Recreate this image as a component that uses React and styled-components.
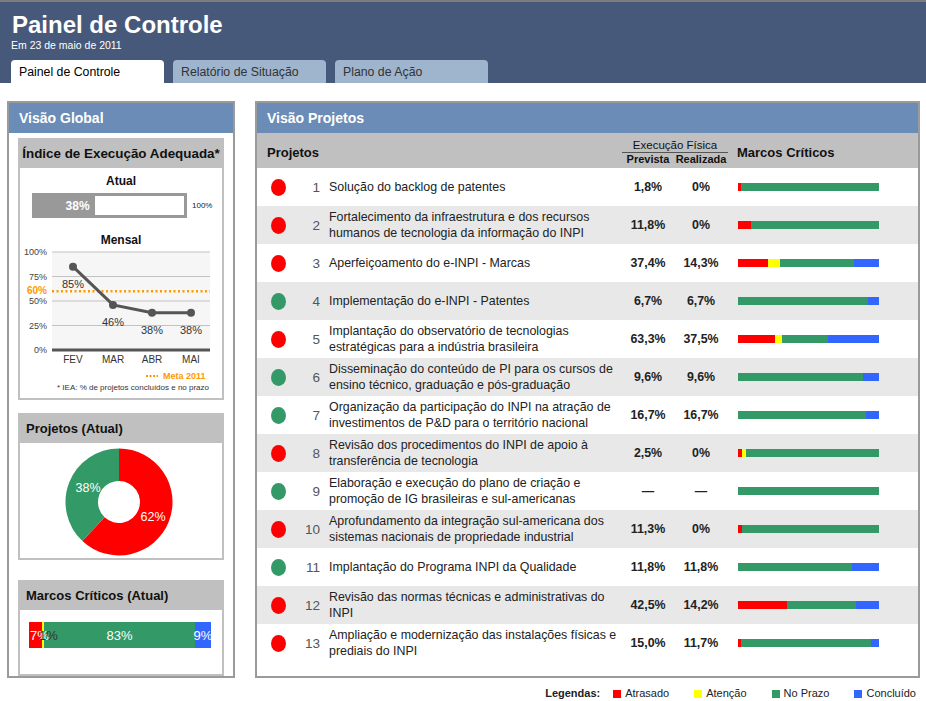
import React from "react";
import styled, { createGlobalStyle } from "styled-components";

const C = { r: "#ff0000", y: "#ffff00", g: "#339966", b: "#3366ff" };

const GlobalStyle = createGlobalStyle`
  body {
    margin: 0;
    background: #fff;
    font-family: "Liberation Sans", Arial, sans-serif;
    color: #222;
  }
  * { box-sizing: border-box; }
`;

const Header = styled.header`
  background: #47597a;
  border-top: 2px solid #7d7d7d;
  height: 83px;
  padding: 9px 0 0 11px;
`;

const Title = styled.h1`
  margin: 0;
  padding-left: 1px;
  font-size: 24px;
  line-height: 28px;
  font-weight: bold;
  color: #fff;
`;

const Subtitle = styled.div`
  font-size: 10.5px;
  line-height: 13px;
  color: #fff;
`;

const Tabs = styled.nav`
  display: flex;
  gap: 9px;
  margin-top: 8px;
`;

const Tab = styled.div`
  width: 153px;
  height: 23px;
  line-height: 21px;
  padding: 2px 0 0 8px;
  font-size: 12.3px;
  border-radius: 4px 4px 0 0;
  background: ${(p) => (p.$active ? "#ffffff" : "#9fb4cd")};
  color: ${(p) => (p.$active ? "#000" : "#333")};
`;

const Main = styled.main`
  display: flex;
  align-items: stretch;
  gap: 20px;
  padding: 18px 6px 0 7px;
`;

const LeftPanel = styled.section`
  width: 228px;
  border: 2px solid #9a9a9a;
  display: flex;
  flex-direction: column;
`;

const RightPanel = styled.section`
  flex: 1;
  border: 2px solid #9a9a9a;
  padding-bottom: 10px;
`;

const PanelTitle = styled.div`
  background: #6a8cb6;
  color: #fff;
  font-weight: bold;
  font-size: 14px;
  line-height: 30px;
  height: 30px;
  padding-left: 10px;
`;

const Card = styled.div`
  margin: ${(p) => p.$mt}px 9px 0;
  border: 2px solid #c0c0c0;
  background: #fff;
`;

const CardHeader = styled.div`
  background: #c0c0c0;
  height: 28px;
  line-height: 28px;
  font-size: ${(p) => (p.$center ? 13.4 : 13)}px;
  font-weight: bold;
  color: #111;
  white-space: nowrap;
  padding: ${(p) => (p.$center ? "0" : "0 6px")};
  text-align: ${(p) => (p.$center ? "center" : "left")};
`;

const CardBody = styled.div`
  height: ${(p) => p.$h}px;
  padding-top: ${(p) => p.$pt || 0}px;
`;

const SubTitle = styled.div`
  text-align: center;
  font-weight: bold;
  font-size: 12px;
  line-height: 16px;
  color: #111;
  margin-top: ${(p) => p.$mt || 0}px;
`;

const GaugeRow = styled.div`
  display: flex;
  align-items: center;
  margin: 4px 0 0 12px;
`;

const Gauge = styled.div`
  width: 155px;
  height: 25px;
  border: 3px solid #999;
  background: #fff;
  display: flex;
`;

const GaugeFill = styled.div`
  background: #999;
  color: #fff;
  font-weight: bold;
  font-size: 12px;
  display: flex;
  align-items: center;
  justify-content: flex-end;
  padding-right: 5px;
`;

const GaugeMax = styled.span`
  font-size: 8px;
  margin-left: 5px;
  color: #222;
`;

const MilestoneBar = styled.div`
  display: flex;
  width: 182px;
  height: 26px;
  margin: 12px 0 0 9px;
`;

const MilestoneSeg = styled.div`
  background: ${(p) => C[p.$c]};
  display: flex;
  align-items: center;
  justify-content: ${(p) => p.$align || "center"};
  white-space: nowrap;
  overflow: visible;
  font-size: 13px;
`;

const SegLabel = styled.span`
  position: relative;
  z-index: 1;
  color: ${(p) => (p.$dark ? "#333" : "#fff")};
  margin-left: ${(p) => p.$ml || 0}px;
`;

const Grid = styled.div`
  display: grid;
  grid-template-columns: 42px 21px 302px 52px 54px 1fr;
  align-items: center;
`;

const TableHead = styled(Grid)`
  background: #c0c0c0;
  height: 35px;
`;

const HeadLabel = styled.div`
  grid-column: ${(p) => p.$col};
  font-weight: bold;
  font-size: 13px;
  color: #111;
  padding-left: ${(p) => p.$pl}px;
  padding-top: 4px;
`;

const ExecGroup = styled.div`
  grid-column: 4 / 6;
  align-self: end;
  margin-bottom: 2px;
  display: grid;
  grid-template-columns: 52px 54px;
  text-align: center;
  color: #111;
`;

const ExecTitle = styled.div`
  grid-column: 1 / 3;
  font-size: 11.5px;
  line-height: 14px;
  border-bottom: 1px solid #555;
`;

const ExecSub = styled.div`
  font-size: 11px;
  font-weight: bold;
  line-height: 13px;
`;

const Row = styled(Grid)`
  height: 38px;
  background: ${(p) => (p.$alt ? "#e8e8e8" : "#fff")};
`;

const Dot = styled.span`
  justify-self: center;
  width: 15px;
  height: 17px;
  border-radius: 50%;
  background: ${(p) => C[p.$c]};
`;

const Num = styled.span`
  text-align: right;
  font-size: 13.5px;
  color: #555;
`;

const ProjText = styled.span`
  padding-left: 9px;
  font-size: 12.4px;
  line-height: 16px;
  color: #222;
`;

const Pct = styled.span`
  text-align: center;
  font-weight: bold;
  font-size: 12.4px;
  color: #222;
`;

const Bar = styled.div`
  margin-left: 10px;
  width: 141px;
  height: 8px;
  display: flex;
`;

const BarSeg = styled.div`
  background: ${(p) => C[p.$c]};
`;

const Legend = styled.footer`
  display: flex;
  justify-content: flex-end;
  align-items: center;
  padding: 9px 10px 0 0;
  font-size: 11px;
  line-height: 13px;
  color: #222;
`;

const LegendTitle = styled.span`
  font-weight: bold;
  margin-right: 13px;
`;

const LegendItem = styled.span`
  display: flex;
  align-items: center;
  gap: 4px;
  margin-left: ${(p) => (p.$first ? 0 : 25)}px;
`;

const Swatch = styled.span`
  width: 8px;
  height: 8px;
  background: ${(p) => C[p.$c]};
`;

const projects = [
  { st: "r", t: "Solução do backlog de patentes", p: "1,8%", r: "0%", bar: [["r", 2], ["g", 98]] },
  { st: "r", t: "Fortalecimento da infraestrutura e dos recursos humanos de tecnologia da informação do INPI", p: "11,8%", r: "0%", bar: [["r", 9], ["g", 91]] },
  { st: "r", t: "Aperfeiçoamento do e-INPI - Marcas", p: "37,4%", r: "14,3%", bar: [["r", 21], ["y", 9], ["g", 52], ["b", 18]] },
  { st: "g", t: "Implementação do e-INPI - Patentes", p: "6,7%", r: "6,7%", bar: [["g", 92], ["b", 8]] },
  { st: "r", t: "Implantação do observatório de tecnologias estratégicas para a indústria brasileira", p: "63,3%", r: "37,5%", bar: [["r", 26], ["y", 5], ["g", 33], ["b", 36]] },
  { st: "g", t: "Disseminação do conteúdo de PI para os cursos de ensino técnico, graduação e pós-graduação", p: "9,6%", r: "9,6%", bar: [["g", 89], ["b", 11]] },
  { st: "g", t: "Organização da participação do INPI na atração de investimentos de P&D para o território nacional", p: "16,7%", r: "16,7%", bar: [["g", 91], ["b", 9]] },
  { st: "r", t: "Revisão dos procedimentos do INPI de apoio à transferência de tecnologia", p: "2,5%", r: "0%", bar: [["r", 2.5], ["y", 3.5], ["g", 94]] },
  { st: "g", t: "Elaboração e execução do plano de criação e promoção de IG brasileiras e sul-americanas", p: "—", r: "—", bar: [["g", 100]] },
  { st: "r", t: "Aprofundamento da integração sul-americana dos sistemas nacionais de propriedade industrial", p: "11,3%", r: "0%", bar: [["r", 2.5], ["g", 97.5]] },
  { st: "g", t: "Implantação do Programa INPI da Qualidade", p: "11,8%", r: "11,8%", bar: [["g", 81], ["b", 19]] },
  { st: "r", t: "Revisão das normas técnicas e administrativas do INPI", p: "42,5%", r: "14,2%", bar: [["r", 35], ["g", 49], ["b", 16]] },
  { st: "r", t: "Ampliação e modernização das instalações físicas e prediais do INPI", p: "15,0%", r: "11,7%", bar: [["r", 2], ["g", 92], ["b", 6]] },
];

const monthly = [
  { m: "FEV", v: 85, x: 53 },
  { m: "MAR", v: 46, x: 93 },
  { m: "ABR", v: 38, x: 132 },
  { m: "MAI", v: 38, x: 171 },
];
const yOf = (v) => 102 - v * 0.98;

function LineChart() {
  const pts = monthly.map((d) => `${d.x},${yOf(d.v)}`).join(" ");
  return (
    <svg width="202" height="150" style={{ display: "block" }} fontFamily="Liberation Sans, Arial, sans-serif">
      <rect x="32" y="4" width="158" height="98" fill="#f6f6f6" />
      {[100, 75, 50, 25].map((v) => (
        <line key={v} x1="32" x2="190" y1={yOf(v)} y2={yOf(v)} stroke="#c2c2c2" strokeWidth="1.2" />
      ))}
      <line x1="32" x2="190" y1="102" y2="102" stroke="#555" strokeWidth="3" />
      <line x1="32" x2="190" y1={yOf(60)} y2={yOf(60)} stroke="#ff9900" strokeWidth="2.5" strokeDasharray="2 2.5" />
      {[100, 75, 50, 25, 0].map((v) => (
        <text key={v} x="27" y={yOf(v)} textAnchor="end" dominantBaseline="central" fontSize="9" fill="#444">
          {v}%
        </text>
      ))}
      <text x="27" y={yOf(60) - 1} textAnchor="end" dominantBaseline="central" fontSize="10" fontWeight="bold" fill="#ff9900">
        60%
      </text>
      <polyline points={pts} fill="none" stroke="#555" strokeWidth="3" />
      {monthly.map((d) => (
        <circle key={d.m} cx={d.x} cy={yOf(d.v)} r="4" fill="#555" />
      ))}
      {monthly.map((d, i) => (
        <text key={d.m + "l"} x={d.x} y={i === 0 ? 36 : i === 1 ? 74 : 82} textAnchor="middle" dominantBaseline="central" fontSize="11" fill="#333">
          {d.v}%
        </text>
      ))}
      {monthly.map((d) => (
        <text key={d.m + "x"} x={d.x} y="111" textAnchor="middle" dominantBaseline="central" fontSize="10" fill="#333">
          {d.m}
        </text>
      ))}
      <line x1="126" x2="138" y1="128" y2="128" stroke="#ff9900" strokeWidth="2" strokeDasharray="2 1.5" />
      <text x="143" y="128" dominantBaseline="central" fontSize="9" fontWeight="bold" fill="#ff9900">
        Meta 2011
      </text>
      <text x="37" y="139" dominantBaseline="central" fontSize="8" fill="#333" textLength="152" lengthAdjust="spacingAndGlyphs">
        * IEA: % de projetos concluídos e no prazo
      </text>
    </svg>
  );
}

function Donut() {
  return (
    <svg width="202" height="115" style={{ display: "block" }} fontFamily="Liberation Sans, Arial, sans-serif">
      <path d="M99,5.5 A53.5,53.5 0 1 1 62.4,98 L84.6,74.3 A21,21 0 1 0 99,38 Z" fill="#ff0000" />
      <path d="M62.4,98 A53.5,53.5 0 0 1 99,5.5 L99,38 A21,21 0 0 0 84.6,74.3 Z" fill="#339966" />
      <text x="68" y="45" textAnchor="middle" dominantBaseline="central" fontSize="12.5" fill="#fff">38%</text>
      <text x="133" y="74" textAnchor="middle" dominantBaseline="central" fontSize="12.5" fill="#fff">62%</text>
    </svg>
  );
}

export default function App() {
  return (
    <>
      <GlobalStyle />
      <Header>
        <Title>Painel de Controle</Title>
        <Subtitle>Em 23 de maio de 2011</Subtitle>
        <Tabs>
          <Tab $active>Painel de Controle</Tab>
          <Tab>Relatório de Situação</Tab>
          <Tab>Plano de Ação</Tab>
        </Tabs>
      </Header>
      <Main>
        <LeftPanel>
          <PanelTitle>Visão Global</PanelTitle>
          <Card $mt={5}>
            <CardHeader $center>Índice de Execução Adequada*</CardHeader>
            <CardBody $h={230} $pt={5}>
              <SubTitle>Atual</SubTitle>
              <GaugeRow>
                <Gauge>
                  <GaugeFill style={{ width: "40%" }}>38%</GaugeFill>
                </Gauge>
                <GaugeMax>100%</GaugeMax>
              </GaugeRow>
              <SubTitle $mt={14}>Mensal</SubTitle>
              <LineChart />
            </CardBody>
          </Card>
          <Card $mt={13}>
            <CardHeader>Projetos (Atual)</CardHeader>
            <CardBody $h={115}>
              <Donut />
            </CardBody>
          </Card>
          <Card $mt={20}>
            <CardHeader>Marcos Críticos (Atual)</CardHeader>
            <CardBody $h={52}>
              <MilestoneBar>
                <MilestoneSeg $c="r" $align="flex-start" style={{ width: "7.1%" }}>
                  <SegLabel $ml={1}>7%</SegLabel>
                </MilestoneSeg>
                <MilestoneSeg $c="y" $align="flex-start" style={{ width: "1.1%" }}>
                  <SegLabel $dark $ml={-3}>1%</SegLabel>
                </MilestoneSeg>
                <MilestoneSeg $c="g" style={{ width: "83%" }}>
                  <SegLabel>83%</SegLabel>
                </MilestoneSeg>
                <MilestoneSeg $c="b" style={{ width: "8.8%" }}>
                  <SegLabel>9%</SegLabel>
                </MilestoneSeg>
              </MilestoneBar>
            </CardBody>
          </Card>
        </LeftPanel>
        <RightPanel>
          <PanelTitle>Visão Projetos</PanelTitle>
          <TableHead>
            <HeadLabel $col="1 / 4" $pl={10}>Projetos</HeadLabel>
            <ExecGroup>
              <ExecTitle>Execução Física</ExecTitle>
              <ExecSub>Prevista</ExecSub>
              <ExecSub>Realizada</ExecSub>
            </ExecGroup>
            <HeadLabel $col="6" $pl={9}>Marcos Críticos</HeadLabel>
          </TableHead>
          {projects.map((p, i) => (
            <Row key={i} $alt={i % 2 === 1}>
              <Dot $c={p.st} />
              <Num>{i + 1}</Num>
              <ProjText>{p.t}</ProjText>
              <Pct>{p.p}</Pct>
              <Pct>{p.r}</Pct>
              <Bar>
                {p.bar.map(([c, w], j) => (
                  <BarSeg key={j} $c={c} style={{ width: `${w}%` }} />
                ))}
              </Bar>
            </Row>
          ))}
        </RightPanel>
      </Main>
      <Legend>
        <LegendTitle>Legendas:</LegendTitle>
        <LegendItem $first><Swatch $c="r" />Atrasado</LegendItem>
        <LegendItem><Swatch $c="y" />Atenção</LegendItem>
        <LegendItem><Swatch $c="g" />No Prazo</LegendItem>
        <LegendItem><Swatch $c="b" />Concluído</LegendItem>
      </Legend>
    </>
  );
}
